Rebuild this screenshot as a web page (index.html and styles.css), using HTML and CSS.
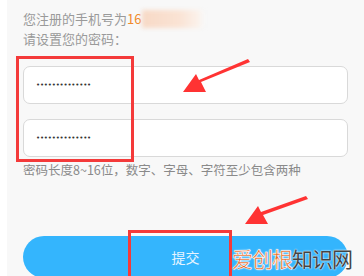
FILE: index.html
```html
<!DOCTYPE html>
<html>
<head>
<meta charset="utf-8">
<link rel="stylesheet" href="styles.css">
</head>
<body>
<div class="page">
  <div class="info">
    <div class="line">您注册的手机号为<span class="num">16</span><span class="blur"></span></div>
    <div class="line">请设置您的密码：</div>
  </div>
  <div class="inputs">
    <div class="field"><span class="dots">••••••••••••••</span></div>
    <div class="field"><span class="dots">••••••••••••••</span></div>
  </div>
  <div class="hint">密码长度8~16位，数字、字母、字符至少包含两种</div>
  <div class="btn">提交</div>

  <div class="mark mark1"></div>
  <div class="mark mark2"></div>
  <svg class="arrows" width="364" height="276" viewBox="0 0 364 276">
    <polygon points="248,59 250,62 201,82 206,92 183,92 196,74 199,80" fill="#f33"/>
    <polygon points="306,196 308,199 263,215 268,224 245,224 258,206 261,212" fill="#f33"/>
  </svg>
  <div class="wm"><span class="o">爱创根</span><span class="g">知识网</span></div>
</div>
</body>
</html>
```

FILE: styles.css
```css
html, body { margin: 0; padding: 0; background: #fff; }
body { font-family: "Noto Sans CJK SC", "Noto Sans", sans-serif; }
.page {
  position: relative;
  margin-left: 7px;
  width: 357px;
  height: 276px;
  background: #f8f8f8;
  overflow: hidden;
  padding: 9px 16px 0 16px;
  box-sizing: border-box;
}
.line { font-size: 13px; line-height: 20px; color: #9a9a9a; display: flex; align-items: center; }
.num { color: #f08a2c; }
.blur {
  display: inline-block;
  width: 62px; height: 18px;
  margin-left: 1px;
  background: linear-gradient(90deg, #f7d9c6 0%, #fae3d4 60%, #fbf1ea 90%, #f8f8f8 100%);
  filter: blur(2px);
}
.inputs { margin-top: 17px; display: flex; flex-direction: column; gap: 15px; }
.field {
  height: 38px;
  width: 325px;
  box-sizing: border-box;
  background: #fff;
  border: 1px solid #d9d9d9;
  border-radius: 7px;
  display: flex; align-items: center;
  padding-left: 12px;
}
.dots { font-size: 7px; letter-spacing: -0.2px; color: #333; line-height: 1; font-family: "DejaVu Sans", sans-serif; }
.hint { margin-top: 3px; font-size: 12.5px; line-height: 20px; color: #8a8a8a; }
.btn {
  margin-top: 56px;
  width: 325px;
  height: 42px;
  border-radius: 21px;
  background: #34b5fd;
  color: #e6f4ff;
  font-size: 14px;
  display: flex; align-items: center; justify-content: center;
}
.mark { position: absolute; border: 3px solid #f43a3a; box-sizing: border-box; }
.mark1 { left: 9px; top: 56px; width: 118px; height: 106px; }
.mark2 { left: 121px; top: 230px; width: 104px; height: 60px; }
.arrows { position: absolute; left: -7px; top: 0; }
.wm {
  position: absolute; left: 225px; top: 246px;
  font-size: 21px; line-height: 24px; letter-spacing: -1px;
  font-family: "Noto Sans CJK SC", sans-serif;
}
.wm .o { color: #e5641f; -webkit-text-stroke: 0.5px #fff; text-shadow: 0 0 2px #fff, 0 0 1px #fff; }
.wm .g { color: #444; text-shadow: 0 0 2px #fff, 0 0 1px #fff; }
```
